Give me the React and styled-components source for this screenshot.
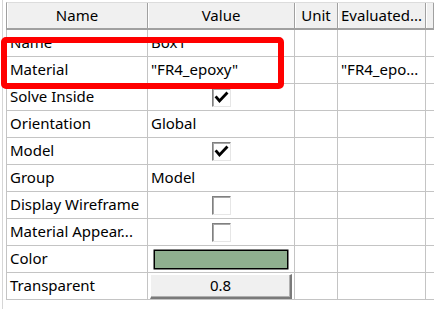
import React from "react";
import styled, { createGlobalStyle } from "styled-components";

const GlobalStyle = createGlobalStyle`
  html, body {
    margin: 0;
    padding: 0;
    background: #ffffff;
  }
  body {
    font-family: "Noto Sans", "Open Sans", sans-serif;
    font-size: 15px;
    color: #000;
  }
`;

const Page = styled.div`
  position: relative;
  width: 434px;
  height: 309px;
  overflow: hidden;
`;

const Frame = styled.div`
  margin-left: 2px;
  height: 100%;
  padding: 2px 0 0 3px;
  border-left: 1px solid #d6d6d6;
  box-sizing: border-box;
`;

const Header = styled.div`
  display: flex;
  height: 28px;
  box-sizing: border-box;
  border-top: 1px solid #dcdcdc;
  border-left: 1px solid #a0a0a0;
  border-bottom: 2px solid #a0a0a0;
  background: #f0f0f0;
`;

const HeaderCell = styled.div`
  flex: ${(p) => (p.$w ? `0 0 ${p.$w}px` : "1")};
  display: flex;
  align-items: center;
  justify-content: ${(p) => (p.$left ? "flex-start" : "center")};
  padding: 0 3px 1px;
  box-sizing: border-box;
  border-right: 1px solid #a0a0a0;
  box-shadow: inset 1px 0 #ffffff;
  white-space: nowrap;
  overflow: hidden;
`;

const Row = styled.div`
  display: flex;
  height: 27px;
  box-sizing: border-box;
  border-left: 1px solid #c4c4c4;
  border-bottom: 1px solid #c4c4c4;
`;

const Cell = styled.div`
  flex: ${(p) => (p.$w ? `0 0 ${p.$w}px` : "1")};
  display: flex;
  align-items: center;
  justify-content: ${(p) => (p.$center ? "center" : "flex-start")};
  padding: 0 ${(p) => (p.$pad !== undefined ? p.$pad : 3)}px
    ${(p) => (p.$box ? 0 : 2)}px;
  box-sizing: border-box;
  border-right: ${(p) => (p.$last ? "none" : "1px solid #c4c4c4")};
  white-space: nowrap;
  overflow: hidden;
`;

const CheckBox = styled.div`
  width: 19px;
  height: 19px;
  box-sizing: border-box;
  background: #ffffff;
  border-top: 1px solid #808080;
  border-left: 1px solid #808080;
  border-right: 1px solid #e6e6e6;
  border-bottom: 1px solid #e6e6e6;
  box-shadow: inset 1px 1px #a8a8a8;
  display: flex;
  align-items: center;
  justify-content: center;
`;

const Swatch = styled.div`
  width: 134px;
  height: 19px;
  margin-left: 3px;
  box-sizing: border-box;
  background: #8faf8f;
  border: 1px solid #000;
  box-shadow: 0 0 0 0.5px #000;
`;

const SpinButton = styled.div`
  width: 142px;
  height: 25px;
  box-sizing: border-box;
  background: #f0f0f0;
  border-top: 1px solid #ffffff;
  border-left: 1px solid #ffffff;
  border-right: 2px solid #7a7a7a;
  border-bottom: 2px solid #7a7a7a;
  box-shadow: inset -1px -1px #b0b0b0;
  display: flex;
  align-items: center;
  justify-content: center;
  padding-bottom: 1px;
`;

const Highlight = styled.div`
  position: absolute;
  left: 1px;
  top: 37px;
  width: 283px;
  height: 52px;
  box-sizing: border-box;
  border: 6px solid #ff0000;
  border-radius: 5px;
  pointer-events: none;
`;

const cols = [141, 147, 43, 88];

const Check = ({ on }) => (
  <CheckBox>
    {on && (
      <svg width="15" height="15" viewBox="0 0 15 15">
        <path
          d="M2.5 7.5 L5.5 11 L12.5 3.5"
          fill="none"
          stroke="#000"
          strokeWidth="2.8"
          strokeLinecap="square"
        />
      </svg>
    )}
  </CheckBox>
);

const rows = [
  { name: "Name", value: "Box1" },
  { name: "Material", value: "\"FR4_epoxy\"", evaluated: "\"FR4_epo..." },
  { name: "Solve Inside", check: true },
  { name: "Orientation", value: "Global" },
  { name: "Model", check: true },
  { name: "Group", value: "Model" },
  { name: "Display Wireframe", check: false },
  { name: "Material Appear...", check: false },
  { name: "Color", swatch: true },
  { name: "Transparent", spin: "0.8" },
];

const renderValue = (r) => {
  if (r.check !== undefined)
    return (
      <Cell $w={cols[1]} $center $box>
        <Check on={r.check} />
      </Cell>
    );
  if (r.swatch)
    return (
      <Cell $w={cols[1]} $pad={3} $box>
        <Swatch />
      </Cell>
    );
  if (r.spin)
    return (
      <Cell $w={cols[1]} $pad={0} $center $box>
        <SpinButton>{r.spin}</SpinButton>
      </Cell>
    );
  return <Cell $w={cols[1]}>{r.value}</Cell>;
};

export default function App() {
  return (
    <Page>
      <GlobalStyle />
      <Frame>
        <Header>
          <HeaderCell $w={cols[0]}>Name</HeaderCell>
          <HeaderCell $w={cols[1]}>Value</HeaderCell>
          <HeaderCell $w={cols[2]}>Unit</HeaderCell>
          <HeaderCell $w={cols[3]} $left>Evaluated...</HeaderCell>
          <HeaderCell />
        </Header>
        {rows.map((r) => (
          <Row key={r.name}>
            <Cell $w={cols[0]}>{r.name}</Cell>
            {renderValue(r)}
            <Cell $w={cols[2]} />
            <Cell $w={cols[3]}>{r.evaluated}</Cell>
            <Cell $last />
          </Row>
        ))}
      </Frame>
      <Highlight />
    </Page>
  );
}
